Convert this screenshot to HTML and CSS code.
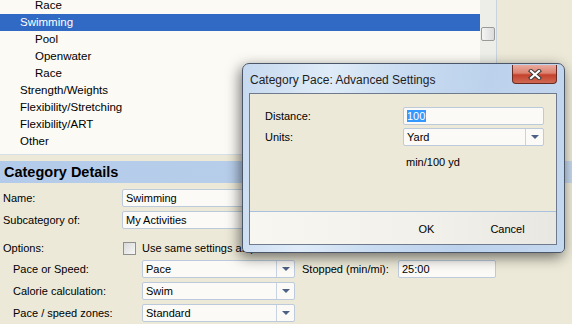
FILE: index.html
```html
<!DOCTYPE html>
<html lang="en">
  <head>
    <meta charset="UTF-8" />
    <meta name="viewport" content="width=device-width, initial-scale=1.0" />
    <title>Category Pace</title>
    <link rel="stylesheet" href="styles.css">
  </head>
  <body>
    <div class="tree-wrap">
      <ul class="tree">
        <li class="lvl2">Race</li>
        <li class="lvl1 selected">Swimming</li>
        <li class="lvl2">Pool</li>
        <li class="lvl2">Openwater</li>
        <li class="lvl2">Race</li>
        <li class="lvl1">Strength/Weights</li>
        <li class="lvl1">Flexibility/Stretching</li>
        <li class="lvl1">Flexibility/ART</li>
        <li class="lvl1">Other</li>
        <li class="lvl1">Imbibing</li>
      </ul>
      <div class="scrollbar"><div class="thumb"></div></div>
    </div>

    <div class="details-head">Category Details</div>

    <div class="form">
      <div class="row">
        <span class="label">Name:</span>
        <div class="field wide">Swimming</div>
      </div>
      <div class="row">
        <span class="label">Subcategory of:</span>
        <div class="field wide">My Activities</div>
      </div>
      <div class="row options">
        <span class="label">Options:</span>
        <span class="checkbox"></span>
        <span class="check-text">Use same settings as parent</span>
      </div>
      <div class="row">
        <span class="label sub">Pace or Speed:</span>
        <div class="field select">Pace<span class="drop"></span></div>
        <span class="label stopped">Stopped (min/mi):</span>
        <div class="field short">25:00</div>
      </div>
      <div class="row">
        <span class="label sub">Calorie calculation:</span>
        <div class="field select">Swim<span class="drop"></span></div>
      </div>
      <div class="row">
        <span class="label sub">Pace / speed zones:</span>
        <div class="field select">Standard<span class="drop"></span></div>
      </div>
    </div>

    <div class="dialog">
      <div class="dlg-title">Category Pace: Advanced Settings</div>
      <div class="close-btn">
        <svg width="16" height="11" viewBox="0 0 16 11">
          <path d="M4 2 L12 9 M12 2 L4 9" stroke="#3a3a3a" stroke-width="4.2" stroke-linecap="square" />
          <path d="M4 2 L12 9 M12 2 L4 9" stroke="#fff" stroke-width="2.2" stroke-linecap="square" />
        </svg>
      </div>
      <div class="dlg-panel">
        <div class="dlg-body">
          <div class="dlg-row">
            <span class="dlg-label">Distance:</span>
            <div class="field dlg-field"><span class="sel-text">100</span></div>
          </div>
          <div class="dlg-row">
            <span class="dlg-label">Units:</span>
            <div class="field dlg-field">Yard<span class="drop"></span></div>
          </div>
          <div class="unit-note">min/100 yd</div>
        </div>
        <div class="dlg-foot">
          <button class="dlg-button">OK</button>
          <button class="dlg-button">Cancel</button>
        </div>
      </div>
    </div>
  </body>
</html>
```

FILE: styles.css
```css
body {
  margin: 0;
  padding: 0;
  background-color: #ece9d8;
  font-family: "Liberation Sans", Arial, sans-serif;
  font-size: 11px;
  color: #000;
  width: 572px;
  height: 324px;
  overflow: hidden;
  position: relative;
}

/* activity tree */
.tree-wrap {
  display: flex;
  width: 497px;
  height: 155px;
  overflow: hidden;
  background-color: #fbfaf5;
  border-bottom: 1px solid #d6dfea;
  box-sizing: border-box;
}

.tree {
  list-style: none;
  margin: -3px 0 0 0;
  padding: 0;
  width: 480px;
  font-size: 11.5px;
}

.tree li {
  height: 17px;
  line-height: 17px;
  white-space: nowrap;
}

.tree .lvl1 {
  padding-left: 20px;
}

.tree .lvl2 {
  padding-left: 35px;
}

.tree .selected {
  background-color: #316ac5;
  color: #fff;
}

.scrollbar {
  width: 17px;
  background-color: #eeeee9;
  border-right: 1px solid #c9d3df;
  box-sizing: border-box;
  padding-top: 27px;
}

.thumb {
  width: 14px;
  height: 14px;
  margin-left: 1px;
  border: 1px solid #9a9a9a;
  border-radius: 2px;
  box-sizing: border-box;
  background: linear-gradient(to right, #f4f4f4, #dcdcdc);
}

/* details */
.details-head {
  margin-top: 6px;
  height: 22px;
  line-height: 22px;
  padding-left: 4px;
  font-size: 14.5px;
  font-weight: bold;
  background: linear-gradient(to right, #b3cbea, #b9cfea 60%, #c5d6ea);
}

.form {
  padding: 6px 0 0 3px;
}

.row {
  display: flex;
  align-items: center;
  height: 18px;
  margin-bottom: 4px;
  white-space: nowrap;
}

.row.options {
  margin-top: 10px;
  margin-bottom: 3px;
}

.label {
  width: 119px;
  flex-shrink: 0;
}

.label.sub {
  width: 129px;
  padding-left: 10px;
}

.label.stopped {
  width: 96px;
  margin-left: 7px;
}

.field {
  position: relative;
  height: 18px;
  line-height: 16px;
  box-sizing: border-box;
  border: 1px solid #bccadc;
  border-radius: 2px;
  background-color: #fbfaf6;
  padding-left: 3px;
  flex-shrink: 0;
}

.field.wide {
  width: 280px;
}

.field.select {
  width: 153px;
}

.field.short {
  width: 98px;
}

.drop {
  position: absolute;
  top: 0;
  right: 0;
  width: 17px;
  height: 16px;
  border-left: 1px solid #c8d3e2;
}

.drop::after {
  content: "";
  position: absolute;
  left: 5px;
  top: 6px;
  border-left: 4px solid transparent;
  border-right: 4px solid transparent;
  border-top: 4px solid #4d6185;
}

.checkbox {
  width: 13px;
  height: 13px;
  margin-left: 1px;
  box-sizing: border-box;
  border: 1px solid #8f8f8f;
  background: linear-gradient(135deg, #d9d9d9, #f7f7f7);
  flex-shrink: 0;
}

.check-text {
  margin-left: 6px;
}

/* advanced settings dialog */
.dialog {
  position: absolute;
  left: 242px;
  top: 63px;
  width: 323px;
  height: 190px;
  box-sizing: border-box;
  border: 1px solid #4b5668;
  border-radius: 7px 7px 5px 5px;
  padding: 0 7px 7px 6px;
  display: flex;
  flex-direction: column;
  background: linear-gradient(100deg, #c6d9ef 0%, #dfebf8 25%, #c9dcf1 45%, #bcd2ec 70%, #c4d8ee 100%);
  box-shadow: -2px 4px 14px rgba(0, 0, 0, 0.55);
}

.dlg-title {
  height: 29px;
  line-height: 32px;
  padding-left: 1px;
  font-size: 12px;
  color: #1e1e1e;
}

.close-btn {
  position: absolute;
  top: 1px;
  right: 7px;
  width: 45px;
  height: 19px;
  box-sizing: border-box;
  border: 1px solid #6a2c22;
  border-top: none;
  border-radius: 0 0 4px 4px;
  background: linear-gradient(#e9aa9d, #dc8270 45%, #c4412c 55%, #cf6a54);
  display: flex;
  justify-content: center;
  align-items: center;
}

.dlg-panel {
  flex: 1;
  display: flex;
  flex-direction: column;
  border: 1px solid #6f7b8c;
}

.dlg-body {
  flex: 1;
  background-color: #ece9d8;
  padding: 13px 0 0 15px;
}

.dlg-row {
  display: flex;
  align-items: center;
  margin-bottom: 3px;
}

.dlg-label {
  width: 138px;
}

.field.dlg-field {
  width: 141px;
}

.sel-text {
  background-color: #3399ff;
  color: #fff;
  padding-right: 1px;
}

.unit-note {
  margin: 10px 0 0 141px;
}

.dlg-foot {
  height: 32px;
  border-top: 1px solid #a9c0de;
  background: linear-gradient(to right, #f7f6f1, #f1f0ea 60%, #e9e7e1);
  display: flex;
  align-items: center;
  justify-content: flex-end;
  gap: 6px;
  padding-right: 11px;
}

.dlg-button {
  width: 75px;
  height: 23px;
  margin-top: 2px;
  border: none;
  background: none;
  font-family: "Liberation Sans", Arial, sans-serif;
  font-size: 11px;
  color: #000;
  padding: 0;
}
```
